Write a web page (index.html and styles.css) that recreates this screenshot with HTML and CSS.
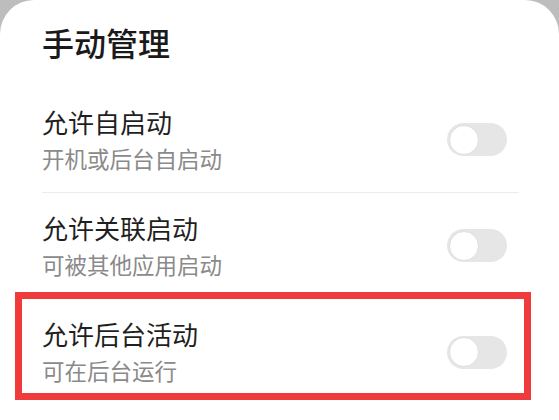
FILE: index.html
```html
<!DOCTYPE html>
<html lang="zh-CN">
<head>
<meta charset="utf-8">
<title>手动管理</title>
<link rel="stylesheet" href="styles.css">
</head>
<body>
<div class="sheet">
  <header class="sheet-header">
    <h1 class="sheet-title">手动管理</h1>
  </header>
  <div class="row">
    <div class="row-text">
      <div class="row-title">允许自启动</div>
      <div class="row-sub">开机或后台自启动</div>
    </div>
    <span class="switch"><span class="knob"></span></span>
  </div>
  <div class="row">
    <div class="row-text">
      <div class="row-title">允许关联启动</div>
      <div class="row-sub">可被其他应用启动</div>
    </div>
    <span class="switch"><span class="knob"></span></span>
  </div>
  <div class="row row-last highlight">
    <div class="row-text">
      <div class="row-title">允许后台活动</div>
      <div class="row-sub">可在后台运行</div>
    </div>
    <span class="switch"><span class="knob"></span></span>
  </div>
</div>
</body>
</html>
```

FILE: styles.css
```css
html, body {
  margin: 0;
  padding: 0;
  height: 100%;
}
body {
  background: #bdbdbd;
  font-family: "Noto Sans CJK SC", "Noto Sans", sans-serif;
  overflow: hidden;
}
.sheet {
  background: #ffffff;
  border-radius: 34px 34px 0 0;
  min-height: 100%;
  box-sizing: border-box;
  padding: 0 40px 0 42px;
}
.sheet-header {
  height: 87px;
  display: flex;
  align-items: center;
}
.sheet-title {
  margin: 0;
  font-size: 32px;
  line-height: 40px;
  font-weight: 500;
  color: #1a1a1a;
  padding-bottom: 4px;
}
.row {
  height: 106px;
  display: flex;
  align-items: center;
  justify-content: space-between;
  padding-right: 12px;
  border-bottom: 1px solid #ececec;
  box-sizing: border-box;
}
.row-last {
  border-bottom: none;
}
.row-title {
  font-size: 26px;
  line-height: 36px;
  color: #1f1f1f;
}
.row-sub {
  font-size: 22.5px;
  line-height: 36px;
  color: #8a8a8a;
}
.switch {
  width: 60px;
  height: 33px;
  border-radius: 17px;
  background: #e6e6e6;
  display: flex;
  align-items: center;
  padding-left: 2px;
  box-sizing: border-box;
}
.knob {
  width: 28px;
  height: 28px;
  border-radius: 50%;
  background: #ffffff;
  border: 1px solid #dedede;
}
.highlight {
  position: relative;
}
.highlight::after {
  content: "";
  position: absolute;
  top: -7px;
  bottom: 5px;
  left: -27px;
  right: -12px;
  border: 7px solid #ef3b3b;
  pointer-events: none;
}
```
